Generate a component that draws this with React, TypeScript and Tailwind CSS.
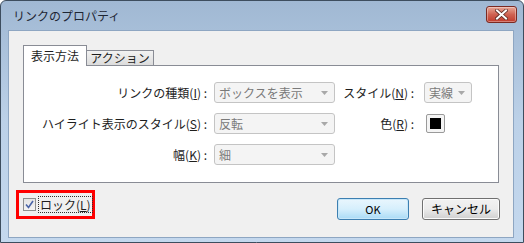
const font = { fontFamily: '"Noto Sans CJK JP", "Noto Sans", sans-serif' };

const Key = ({ k }: { k: string }) => (
  <span>
    (<span className="underline">{k}</span>)
  </span>
);

const Select = ({ value, width }: { value: string; width: string }) => (
  <div
    className={`flex h-[21px] items-center justify-between rounded-[3px] border border-[#c4c4c4] bg-[#f4f4f4] pl-[4px] pr-[6px] text-[#7a7a7a] ${width}`}
  >
    <span className="leading-none">{value}</span>
    <svg width="7" height="4" viewBox="0 0 7 4" aria-hidden="true">
      <path d="M0 0h7L3.5 4z" fill="#a8a8a8" />
    </svg>
  </div>
);

const CloseButton = () => (
  <div className="flex h-[17px] w-[31px] items-center justify-center rounded-[3px] border border-[#7b2a22] bg-gradient-to-b from-[#e7a796] via-[#cf6252] to-[#c0392b] shadow-[inset_0_0_0_1px_rgba(255,255,255,0.35)]">
    <svg width="13" height="11" viewBox="0 0 13 11" aria-hidden="true">
      <path d="M2 1.5l9 8M11 1.5l-9 8" stroke="#5a2a24" strokeWidth="3.6" strokeLinecap="square" />
      <path d="M2 1.5l9 8M11 1.5l-9 8" stroke="#ffffff" strokeWidth="2" strokeLinecap="square" />
    </svg>
  </div>
);

export default function App() {
  return (
    <div className="h-[243px] w-[524px] bg-white text-[12px] text-[#1e1e1e]" style={font}>
      <div className="flex h-full w-full flex-col rounded-t-[6px] border border-[#3d4d5e] bg-gradient-to-b from-[#a0b8d3] via-[#bcd1e8] to-[#c4d8ee] px-[7px] pb-[4px]">
        <div className="flex h-[29px] shrink-0 items-center justify-between">
          <span className="pl-[5px] text-[12px] text-[#1e2633]">リンクのプロパティ</span>
          <div className="-mr-[1px] -mt-[3px]">
            <CloseButton />
          </div>
        </div>
        <div className="mr-[2px] flex flex-1 flex-col border border-[#8ea6c2] bg-[#f0f0f0] px-[14px] pt-[14px]">
          <div className="flex h-[20px] items-end">
            <div className="relative z-10 -mb-px flex h-[21px] w-[64px] items-center justify-center border border-b-0 border-[#898c95] bg-white">
              表示方法
            </div>
            <div className="-ml-px flex h-[15px] w-[68px] items-center justify-center border border-b-0 border-[#898c95] bg-gradient-to-b from-[#f2f2f2] to-[#dcdcdc]">
              アクション
            </div>
          </div>
          <div className="flex h-[118px] w-[476px] flex-col gap-[10px] border border-[#898c95] bg-white pt-[16px]">
            <div className="flex items-center">
              <div className="w-[190px] whitespace-nowrap pr-[7px] text-right">
                リンクの種類<Key k="I" /> :
              </div>
              <Select value="ボックスを表示" width="w-[121px]" />
              <div className="w-[89px] whitespace-nowrap pr-[10px] text-right">
                スタイル<Key k="N" /> :
              </div>
              <Select value="実線" width="w-[48px]" />
            </div>
            <div className="flex items-center">
              <div className="w-[190px] whitespace-nowrap pr-[7px] text-right">
                ハイライト表示のスタイル<Key k="S" /> :
              </div>
              <Select value="反転" width="w-[121px]" />
              <div className="w-[91px] whitespace-nowrap pr-[12px] text-right">
                色<Key k="R" /> :
              </div>
              <div className="flex h-[19px] w-[19px] items-center justify-center rounded-[2px] border border-[#9a9a9a] bg-[#f4f4f4]">
                <div className="h-[11px] w-[11px] bg-black" />
              </div>
            </div>
            <div className="flex items-center">
              <div className="w-[190px] whitespace-nowrap pr-[7px] text-right">
                幅<Key k="K" /> :
              </div>
              <Select value="細" width="w-[121px]" />
            </div>
          </div>
          <div className="mt-[7px] flex items-start">
            <div className="-ml-[7px] flex h-[29px] w-[79px] items-center gap-[2px] border-[3px] border-[#ff0000] pl-[4px]">
              <div className="flex h-[13px] w-[13px] shrink-0 items-center justify-center border border-[#8e8f8f] bg-gradient-to-b from-[#e4e4e4] to-[#f4f4f4]">
                <svg width="9" height="9" viewBox="0 0 9 9" aria-hidden="true">
                  <path d="M1 4.5l2.5 3L8 1" stroke="#4a64a8" strokeWidth="1.6" fill="none" />
                </svg>
              </div>
              <span className="whitespace-nowrap border border-dotted border-[#333] px-[1px] leading-[15px]">
                ロック<Key k="L" />
              </span>
            </div>
            <div className="-mr-[1px] ml-auto mt-[8px] flex gap-[13px]">
              <button
                type="button"
                className="h-[22px] w-[72px] rounded-[3px] border border-[#3c7fb1] bg-gradient-to-b from-[#e9f6fd] via-[#d6effc] to-[#a9dbf6] text-[11px] text-black shadow-[inset_0_0_0_1px_#c7e7f9]"
              >
                OK
              </button>
              <button
                type="button"
                className="h-[22px] w-[78px] rounded-[3px] border border-[#707070] bg-gradient-to-b from-[#f2f2f2] via-[#ebebeb] to-[#cfcfcf] text-black shadow-[inset_0_0_0_1px_#fbfbfb]"
              >
                キャンセル
              </button>
            </div>
          </div>
        </div>
      </div>
    </div>
  );
}
